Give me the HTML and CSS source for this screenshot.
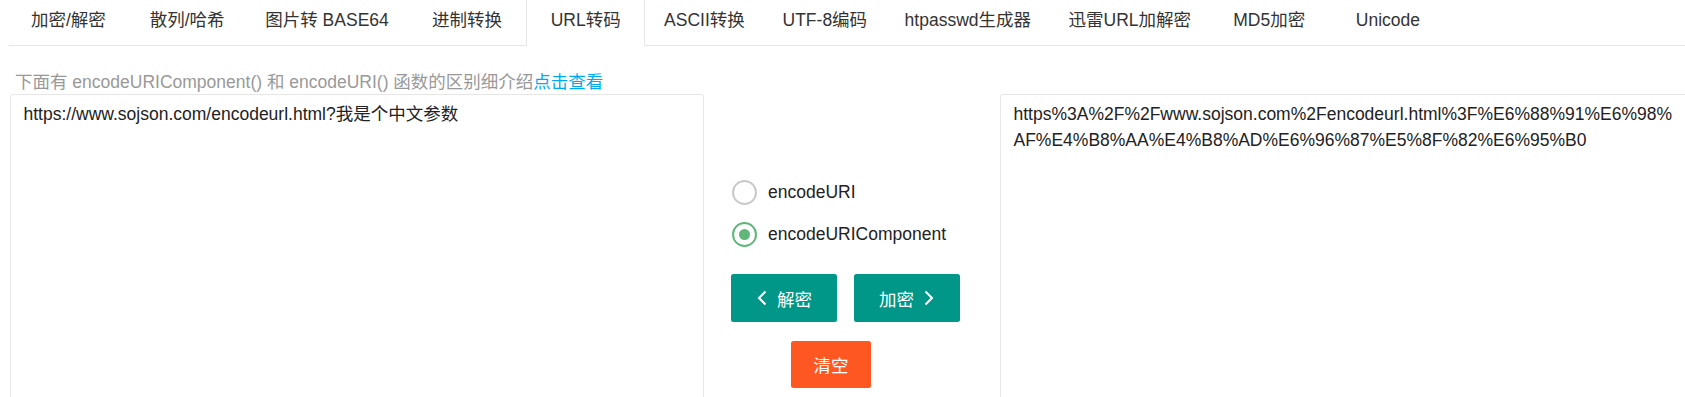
FILE: index.html
```html
<!DOCTYPE html>
<html lang="zh-CN">
<head>
<meta charset="utf-8">
<title>URL转码</title>
<link rel="stylesheet" href="styles.css">
</head>
<body>
<div class="page">
  <ul class="tabs">
    <li>加密/解密</li>
    <li>散列/哈希</li>
    <li>图片转 BASE64</li>
    <li>进制转换</li>
    <li class="active">URL转码</li>
    <li>ASCII转换</li>
    <li>UTF-8编码</li>
    <li>htpasswd生成器</li>
    <li>迅雷URL加解密</li>
    <li>MD5加密</li>
    <li>Unicode</li>
  </ul>
  <p class="hint">下面有 encodeURIComponent() 和 encodeURI() 函数的区别细介绍<a class="hint-link" href="#">点击查看</a></p>
  <div class="workspace">
    <textarea class="box">https://www.sojson.com/encodeurl.html?我是个中文参数</textarea>
    <div class="controls">
      <label class="radio"><span class="radio-icon"></span><span class="radio-text">encodeURI</span></label>
      <label class="radio checked"><span class="radio-icon"></span><span class="radio-text">encodeURIComponent</span></label>
      <div class="btn-row">
        <button class="btn teal"><svg class="chev" viewBox="0 0 12 16" width="12" height="16"><polyline points="9.5,1.5 3,8 9.5,14.5" fill="none" stroke="#fff" stroke-width="2"/></svg><span>解密</span></button>
        <button class="btn teal"><span>加密</span><svg class="chev" viewBox="0 0 12 16" width="12" height="16"><polyline points="2.5,1.5 9,8 2.5,14.5" fill="none" stroke="#fff" stroke-width="2"/></svg></button>
      </div>
      <button class="btn danger clear">清空</button>
    </div>
    <textarea class="box">https%3A%2F%2Fwww.sojson.com%2Fencodeurl.html%3F%E6%88%91%E6%98%AF%E4%B8%AA%E4%B8%AD%E6%96%87%E5%8F%82%E6%95%B0</textarea>
  </div>
</div>
</body>
</html>
```

FILE: styles.css
```css
html, body {
  margin: 0;
  padding: 0;
  background: #fff;
}
body {
  font-family: "Liberation Sans", Arial, "Noto Sans CJK SC", sans-serif;
  color: #333;
  overflow: hidden;
}
.page {
  width: 1700px;
}
.tabs {
  list-style: none;
  margin: 0 0 0 9px;
  padding: 0;
  display: flex;
  height: 45px;
  border-bottom: 1px solid #e6e6e6;
  white-space: nowrap;
}
.tabs li {
  position: relative;
  flex: none;
  box-sizing: content-box;
  min-width: 81.25px;
  padding: 0 18.75px;
  height: 45px;
  line-height: 40px;
  font-size: 17.5px;
  text-align: center;
  color: #333;
}
.tabs li.active::after {
  content: "";
  position: absolute;
  left: 0;
  top: -6px;
  width: 100%;
  height: 52px;
  box-sizing: border-box;
  border: 1px solid #e6e6e6;
  border-bottom-color: #fff;
  border-radius: 2px 2px 0 0;
  pointer-events: none;
}
.hint {
  margin: 25px 0 0 15px;
  font-size: 17.5px;
  line-height: 22px;
  color: #999;
}
.hint-link {
  color: #01aaed;
  text-decoration: none;
}
.workspace {
  display: grid;
  grid-template-columns: 694px 296px 695px;
  margin: 1px 0 0 10px;
}
.box {
  display: block;
  box-sizing: border-box;
  width: 100%;
  height: 330px;
  margin: 0;
  padding: 6px 12.5px 7.5px;
  border: 1px solid #e6e6e6;
  border-radius: 2.5px;
  font-family: "Liberation Sans", Arial, "Noto Sans CJK SC", sans-serif;
  font-size: 17.5px;
  line-height: 26px;
  color: #222;
  background: #fff;
  resize: none;
  overflow: hidden;
  outline: none;
}
.controls {
  display: flex;
  flex-direction: column;
  align-items: flex-start;
  padding: 77px 0 0 27px;
}
.radio {
  display: flex;
  align-items: center;
  height: 42.5px;
  font-size: 17.5px;
  color: #222;
}
.radio-icon {
  box-sizing: border-box;
  width: 25px;
  height: 25px;
  margin-left: 1px;
  border: 2px solid #c9c9c9;
  border-radius: 50%;
  display: flex;
  align-items: center;
  justify-content: center;
}
.radio.checked .radio-icon {
  border-color: #5fb878;
}
.radio.checked .radio-icon::before {
  content: "";
  width: 11px;
  height: 11px;
  border-radius: 50%;
  background: #5fb878;
}
.radio-text {
  margin-left: 11px;
}
.btn-row {
  display: flex;
  gap: 17px;
  margin-top: 18px;
}
.btn {
  box-sizing: border-box;
  display: inline-flex;
  align-items: center;
  justify-content: center;
  gap: 9px;
  border: none;
  border-radius: 2.5px;
  color: #fff;
  font-family: "Liberation Sans", Arial, "Noto Sans CJK SC", sans-serif;
  font-size: 17.5px;
  padding: 0;
  cursor: pointer;
}
.btn.teal {
  width: 106px;
  height: 48px;
  background: #009688;
}
.btn.danger {
  background: #ff5722;
}
.clear {
  width: 80px;
  height: 47px;
  margin: 19px 0 0 60px;
}
.chev {
  display: block;
  width: 12px;
  height: 16px;
}
```
